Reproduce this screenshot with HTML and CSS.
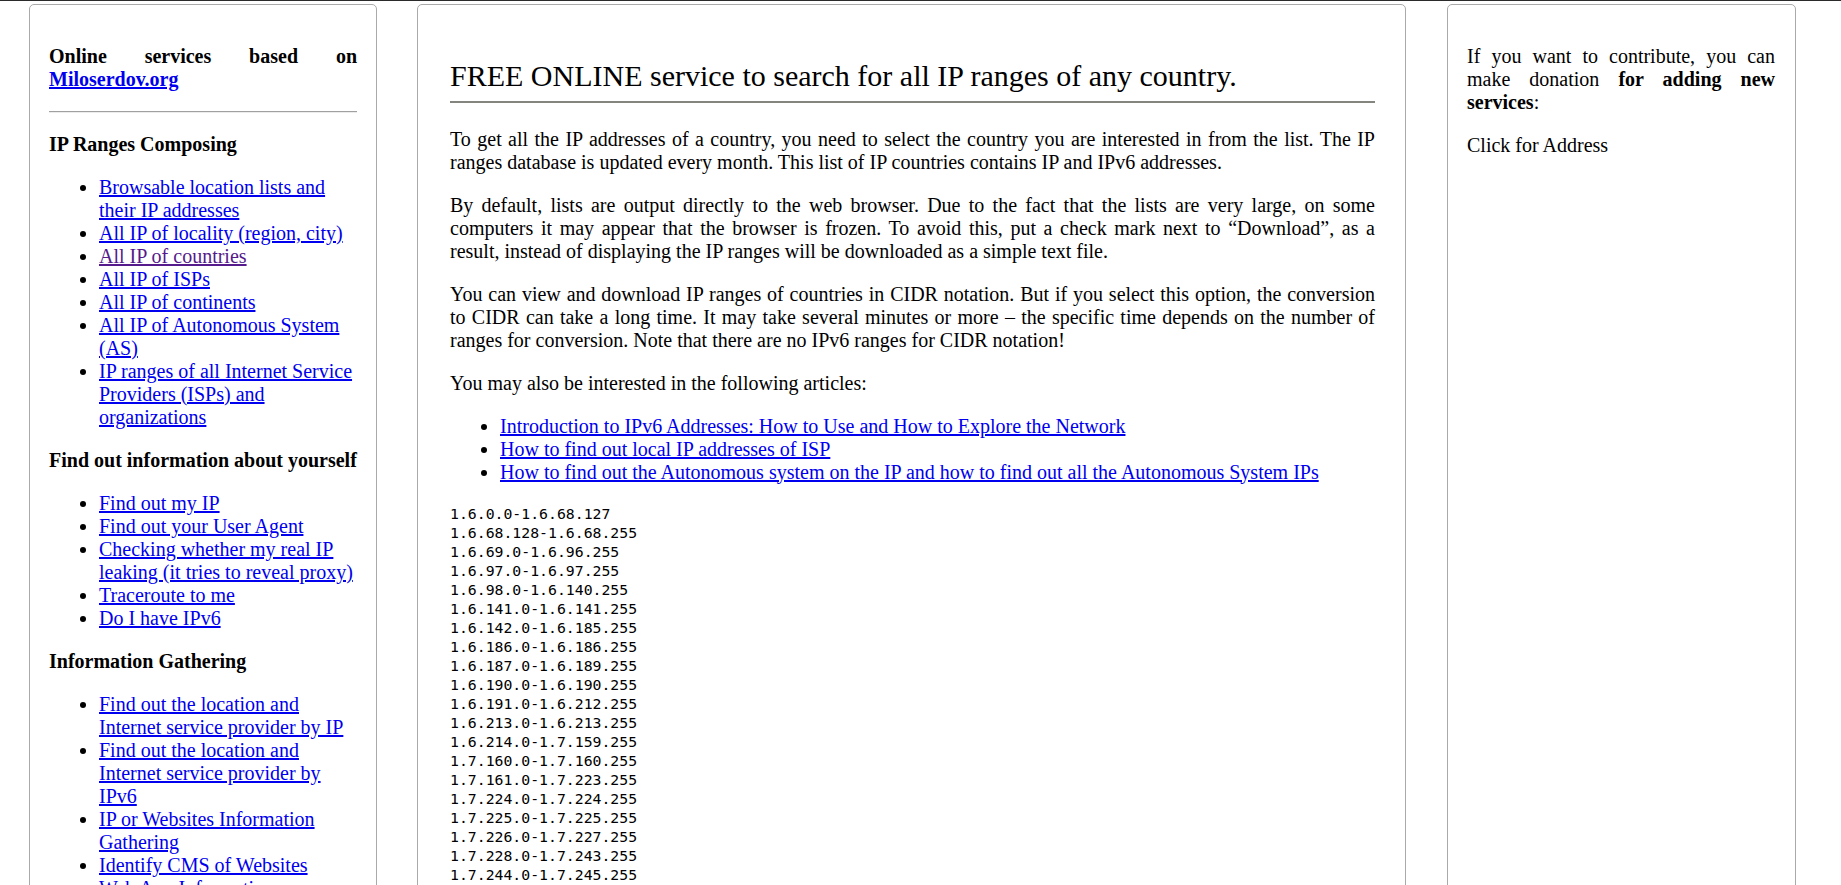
FILE: index.html
```html
<!DOCTYPE html>
<html lang="en">
<head>
<meta charset="utf-8">
<title>FREE ONLINE service to search for all IP ranges of any country</title>
<link rel="stylesheet" href="styles.css">
</head>
<body>
<div class="page">
  <aside class="panel panel-left">
    <p class="site-title"><strong>Online services based on <a href="#">Miloserdov.org</a></strong></p>
    <hr class="rule">
    <h3 class="nav-title">IP Ranges Composing</h3>
    <ul class="nav-list">
      <li><a href="#">Browsable location lists and their IP addresses</a></li>
      <li><a href="#">All IP of locality (region, city)</a></li>
      <li><a href="#" class="visited">All IP of countries</a></li>
      <li><a href="#">All IP of ISPs</a></li>
      <li><a href="#">All IP of continents</a></li>
      <li><a href="#">All IP of Autonomous System (AS)</a></li>
      <li><a href="#">IP ranges of all Internet Service Providers (ISPs) and organizations</a></li>
    </ul>
    <h3 class="nav-title">Find out information about yourself</h3>
    <ul class="nav-list">
      <li><a href="#">Find out my IP</a></li>
      <li><a href="#">Find out your User Agent</a></li>
      <li><a href="#">Checking whether my real IP leaking (it tries to reveal proxy)</a></li>
      <li><a href="#">Traceroute to me</a></li>
      <li><a href="#">Do I have IPv6</a></li>
    </ul>
    <h3 class="nav-title">Information Gathering</h3>
    <ul class="nav-list">
      <li><a href="#">Find out the location and Internet service provider by IP</a></li>
      <li><a href="#">Find out the location and Internet service provider by IPv6</a></li>
      <li><a href="#">IP or Websites Information Gathering</a></li>
      <li><a href="#">Identify CMS of Websites</a></li>
      <li><a href="#">Web App Information Gathering</a></li>
      <li><a href="#">Find out all sites on one IP</a></li>
    </ul>
  </aside>

  <main class="panel panel-main">
    <h1 class="main-title">FREE ONLINE service to search for all IP ranges of any country.</h1>
    <p class="text">To get all the IP addresses of a country, you need to select the country you are interested in from the list. The IP ranges database is updated every month. This list of IP countries contains IP and IPv6 addresses.</p>
    <p class="text">By default, lists are output directly to the web browser. Due to the fact that the lists are very large, on some computers it may appear that the browser is frozen. To avoid this, put a check mark next to “Download”, as a result, instead of displaying the IP ranges will be downloaded as a simple text file.</p>
    <p class="text">You can view and download IP ranges of countries in CIDR notation. But if you select this option, the conversion to CIDR can take a long time. It may take several minutes or more – the specific time depends on the number of ranges for conversion. Note that there are no IPv6 ranges for CIDR notation!</p>
    <p class="text">You may also be interested in the following articles:</p>
    <ul class="article-list">
      <li><a href="#">Introduction to IPv6 Addresses: How to Use and How to Explore the Network</a></li>
      <li><a href="#">How to find out local IP addresses of ISP</a></li>
      <li><a href="#">How to find out the Autonomous system on the IP and how to find out all the Autonomous System IPs</a></li>
    </ul>
<pre class="ranges">1.6.0.0-1.6.68.127
1.6.68.128-1.6.68.255
1.6.69.0-1.6.96.255
1.6.97.0-1.6.97.255
1.6.98.0-1.6.140.255
1.6.141.0-1.6.141.255
1.6.142.0-1.6.185.255
1.6.186.0-1.6.186.255
1.6.187.0-1.6.189.255
1.6.190.0-1.6.190.255
1.6.191.0-1.6.212.255
1.6.213.0-1.6.213.255
1.6.214.0-1.7.159.255
1.7.160.0-1.7.160.255
1.7.161.0-1.7.223.255
1.7.224.0-1.7.224.255
1.7.225.0-1.7.225.255
1.7.226.0-1.7.227.255
1.7.228.0-1.7.243.255
1.7.244.0-1.7.245.255
1.7.246.0-1.7.255.255
1.22.0.0-1.23.255.255
1.38.0.0-1.39.255.255</pre>
  </main>

  <aside class="panel panel-right">
    <p class="donate">If you want to contribute, you can make donation <strong>for adding new services</strong>:</p>
    <p class="donate-link">Click for Address</p>
  </aside>
</div>
</body>
</html>
```

FILE: styles.css
```css
html, body {
  margin: 0;
  height: 100%;
  overflow: hidden;
}

body {
  box-sizing: border-box;
  border-top: 1px solid #2b2b2b;
  background: #ffffff;
  color: #000000;
  font-family: "Liberation Serif", "Times New Roman", serif;
  font-size: 20px;
  line-height: 23px;
}

a {
  color: #0000ee;
  text-decoration: underline;
}

a.visited {
  color: #551a8b;
}

.page {
  display: flex;
  align-items: flex-start;
  padding: 3px 0 0 29px;
}

.panel {
  flex: none;
  box-sizing: border-box;
  min-height: 1200px;
  border: 1px solid #aaaaaa;
  border-radius: 5px;
  background: #ffffff;
}

.panel-left {
  width: 348px;
  padding: 20px 19px;
}

.panel-main {
  width: 989px;
  margin-left: 40px;
  padding: 20px 30px 20px 32px;
}

.panel-right {
  width: 349px;
  margin-left: 41px;
  padding: 20px 20px 20px 19px;
}

.site-title {
  margin: 20px 0;
  text-align: justify;
}

.rule {
  height: 0;
  margin: 20px 0;
  border: 0;
  border-top: 1px solid #a0a0a0;
  border-bottom: 1px solid #ececec;
}

.nav-title {
  margin: 20px 0;
  font-size: 20px;
  font-weight: bold;
  white-space: nowrap;
}

.nav-list {
  margin: 20px 0;
  padding-left: 50px;
}

.main-title {
  margin: 34px 0 25px;
  padding-bottom: 7px;
  border-bottom: 2px solid #85857f;
  font-size: 30px;
  font-weight: normal;
  line-height: 34.5px;
}

.text {
  margin: 20px 0;
  text-align: justify;
}

.article-list {
  margin: 20px 0;
  padding-left: 50px;
}

.ranges {
  margin: 20px 0;
  padding-left: 0;
  font-family: "DejaVu Sans Mono", "Liberation Mono", monospace;
  font-size: 14.8px;
  line-height: 19px;
}

.donate {
  margin: 20px 0;
  text-align: justify;
}

.donate-link {
  margin: 20px 0;
}
```
